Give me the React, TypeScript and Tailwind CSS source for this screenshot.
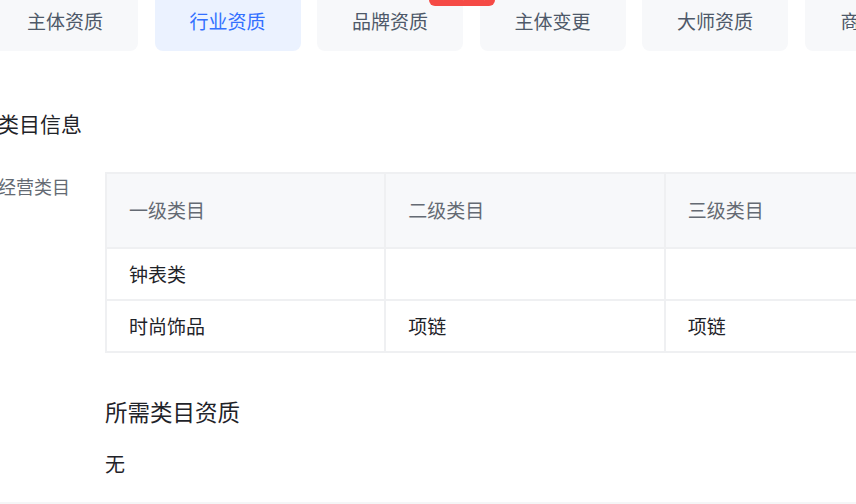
const tabs = ['主体资质', '行业资质', '品牌资质', '主体变更', '大师资质', '商品资质']

const rows = [
  ['钟表类', '', ''],
  ['时尚饰品', '项链', '项链'],
]

export default function App() {
  return (
    <div className="w-[856px] h-[504px] overflow-hidden bg-white flex flex-col font-['Noto_Sans_CJK_SC','Noto_Sans',sans-serif]">
      {/* tab strip */}
      <div className="flex gap-[16.5px] -ml-[8px] -mt-[9px] shrink-0">
        {tabs.map((t, i) => (
          <div
            key={t}
            className={
              'relative w-[146px] h-[60px] shrink-0 rounded-[8px] flex items-center justify-center text-[19px] ' +
              (i === 1 ? 'bg-[#ebf2ff] text-[#3370ff]' : 'bg-[#f7f8fa] text-[#4e5969]')
            }
          >
            {i === 5 ? <span className="pl-[36px] w-full">{t}</span> : t}
            {i === 2 && (
              <span className="absolute z-10 -top-[7px] left-[112px] w-[66px] h-[22px] rounded-[6px] bg-[#f54a45] text-white text-[12px] leading-[20px] font-bold text-center whitespace-nowrap">
                限时免费
              </span>
            )}
          </div>
        ))}
      </div>

      <div className="mt-[58px] -ml-[2px] text-[21px] leading-[28px] text-[#1f2329]">类目信息</div>

      <div className="mt-[35px] flex -ml-[2px]">
        <div className="w-[107px] shrink-0 text-[18px] leading-[28px] text-[#646a73]">经营类目</div>
        <div className="flex flex-col">
          <table className="border-collapse w-[840px] text-[19px] shrink-0">
            <thead>
              <tr className="bg-[#f7f8fa]">
                {['一级类目', '二级类目', '三级类目'].map((h) => (
                  <td
                    key={h}
                    className="w-[280px] h-[75px] border-2 border-[#eff0f2] pl-[22px] text-[#646a73] font-normal text-left"
                  >
                    {h}
                  </td>
                ))}
              </tr>
            </thead>
            <tbody>
              {rows.map((r) => (
                <tr key={r[0]}>
                  {r.map((c, j) => (
                    <td key={j} className="h-[52px] border-2 border-[#eff0f2] pl-[22px] text-[#1f2329]">
                      {c}
                    </td>
                  ))}
                </tr>
              ))}
            </tbody>
          </table>

          <div className="mt-[43px] text-[22.5px] leading-[30px] text-[#1f2329]">所需类目资质</div>
          <div className="mt-[24px] text-[20px] leading-[28px] text-[#1f2329]">无</div>
        </div>
      </div>

      <div className="mt-auto h-[2px] bg-[#f5f6f7] shrink-0" />
    </div>
  )
}
